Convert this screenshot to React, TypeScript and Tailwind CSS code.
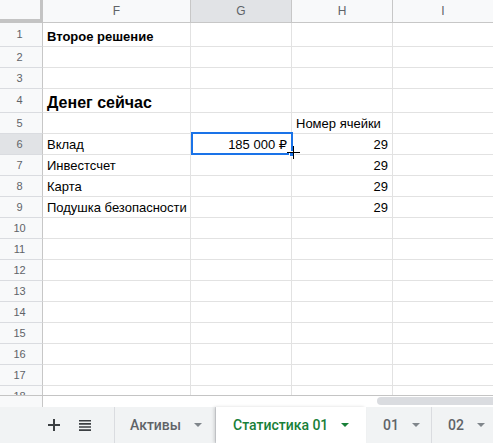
import React from "react";

type Row = {
  n: number;
  tall?: boolean;
  f?: string;
  fClass?: string;
  g?: string;
  h?: string;
  hLeft?: boolean;
};

const rows: Row[] = [
  { n: 1, tall: true, f: "Второе решение", fClass: "font-bold text-[13px]" },
  { n: 2 },
  { n: 3 },
  { n: 4, tall: true, f: "Денег сейчас", fClass: "font-bold text-[16px]" },
  { n: 5, h: "Номер ячейки", hLeft: true },
  { n: 6, f: "Вклад", g: "185 000 ₽", h: "29" },
  { n: 7, f: "Инвестсчет", h: "29" },
  { n: 8, f: "Карта", h: "29" },
  { n: 9, f: "Подушка безопасности", h: "29" },
  { n: 10 },
  { n: 11 },
  { n: 12 },
  { n: 13 },
  { n: 14 },
  { n: 15 },
  { n: 16 },
  { n: 17 },
  { n: 18 },
];

const cols = [
  { label: "F", w: "w-[148px]", selected: false },
  { label: "G", w: "w-[101px]", selected: true },
  { label: "H", w: "w-[101px]", selected: false },
];

function Caret({ className }: { className: string }) {
  return (
    <svg width="8" height="4" viewBox="0 0 8 4" className={className}>
      <path d="M0 0h8L4 4z" fill="currentColor" />
    </svg>
  );
}

function Tab({
  label,
  w,
  pl,
  active,
}: {
  label: string;
  w: string;
  pl: string;
  active?: boolean;
}) {
  return (
    <div
      className={`${w} ${pl} h-full shrink-0 flex items-center gap-[13px] ${
        active
          ? "bg-white text-[#188038] shadow-[-2px_0_3px_rgba(0,0,0,0.15)] z-10"
          : "text-[#5f6368] border-r border-[#dadce0]"
      }`}
    >
      <span className="text-[14px] font-medium">{label}</span>
      <Caret className={active ? "text-[#188038]" : "text-[#80868b]"} />
    </div>
  );
}

export default function App() {
  return (
    <div className="w-[493px] h-[443px] overflow-hidden bg-white font-['Liberation_Sans',Arial,sans-serif] text-black select-none">
      <div className="relative h-[396px] overflow-hidden border-b border-[#c4c4c4]">
        {/* column headers */}
        <div className="flex h-[23px]">
          <div className="w-[43px] shrink-0 bg-[#f8f9fa] border-r-[3px] border-b-[4px] border-[#c4c4c4]" />
          {cols.map((c) => (
            <div
              key={c.label}
              className={`${c.w} shrink-0 flex items-center justify-center border-r border-b border-[#c7c7c7] text-[12px] text-[#5f6368] ${
                c.selected ? "bg-[#e1e3e6]" : "bg-[#f8f9fa]"
              }`}
            >
              {c.label}
            </div>
          ))}
          <div className="flex-1 flex items-center justify-center border-b border-[#c7c7c7] bg-[#f8f9fa] text-[12px] text-[#5f6368]">
            I
          </div>
        </div>

        {rows.map((r) => (
          <div key={r.n} className={`flex ${r.tall ? "h-[24px]" : "h-[21px]"}`}>
            <div
              className={`w-[43px] shrink-0 flex items-center justify-center pr-[3px] border-r border-b border-r-[#c7c7c7] border-b-[#dadce0] text-[11px] text-[#5f6368] ${
                r.n === 6 ? "bg-[#e1e3e6]" : "bg-[#f8f9fa]"
              }`}
            >
              {r.n}
            </div>
            <div
              className={`w-[148px] shrink-0 flex items-end pl-[4px] pb-[2px] border-r border-b border-[#e2e2e2] whitespace-nowrap leading-[15px] ${
                r.fClass ?? "text-[13px]"
              }`}
            >
              {r.f}
            </div>
            <div className="w-[101px] shrink-0 flex items-end justify-end pr-[4px] pb-[2px] border-r border-b border-[#e2e2e2] text-[13px] leading-[15px] whitespace-nowrap font-['Liberation_Sans','DejaVu_Sans',sans-serif]">
              {r.g}
            </div>
            <div
              className={`w-[101px] shrink-0 flex items-end pb-[2px] border-r border-b border-[#e2e2e2] text-[13px] leading-[15px] whitespace-nowrap ${
                r.hLeft ? "justify-start pl-[4px]" : "justify-end pr-[4px]"
              }`}
            >
              {r.h}
            </div>
            <div className="flex-1 border-b border-[#e2e2e2]" />
          </div>
        ))}

        {/* selection on G6 */}
        <div className="absolute left-[191px] top-[132px] w-[102px] h-[23px] border-2 border-[#1a73e8]" />
        <div className="absolute left-[289px] top-[151px] w-[6px] h-[6px] bg-[#1a73e8] border border-white" />
        {/* crosshair cursor */}
        <div className="absolute left-[287px] top-[152px] w-[13px] h-[1px] bg-black" />
        <div className="absolute left-[293px] top-[146px] w-[1px] h-[13px] bg-black" />
      </div>

      {/* scrollbar strip */}
      <div className="flex h-[11px]">
        <div className="w-[43px] shrink-0 bg-[#f8f9fa] border-r border-[#c7c7c7]" />
        <div className="flex-1 pl-[334px] pt-[1px]">
          <div className="h-[8px] bg-[#dadce0] rounded-l-full" />
        </div>
      </div>

      {/* sheet tabs */}
      <div className="flex h-[36px] bg-[#f1f3f4] font-['Roboto',sans-serif]">
        <div className="w-[115px] shrink-0 flex items-center pl-[48px] gap-[19px] border-r border-[#dadce0]">
          <svg width="12" height="12" viewBox="0 0 12 12">
            <path d="M5 0h2v5h5v2H7v5H5V7H0V5h5z" fill="#3c4043" />
          </svg>
          <svg width="12" height="11" viewBox="0 0 12 11">
            <path d="M0 0h12v1.6H0zM0 3.1h12v1.6H0zM0 6.2h12v1.6H0zM0 9.3h12v1.6H0z" fill="#3c4043" />
          </svg>
        </div>
        <Tab label="Активы" w="w-[101px]" pl="pl-[15px]" />
        <Tab label="Статистика 01" w="w-[150px]" pl="pl-[17px]" active />
        <Tab label="01" w="w-[66px]" pl="pl-[17px]" />
        <Tab label="02" w="w-[70px]" pl="pl-[16px]" />
      </div>
    </div>
  );
}
